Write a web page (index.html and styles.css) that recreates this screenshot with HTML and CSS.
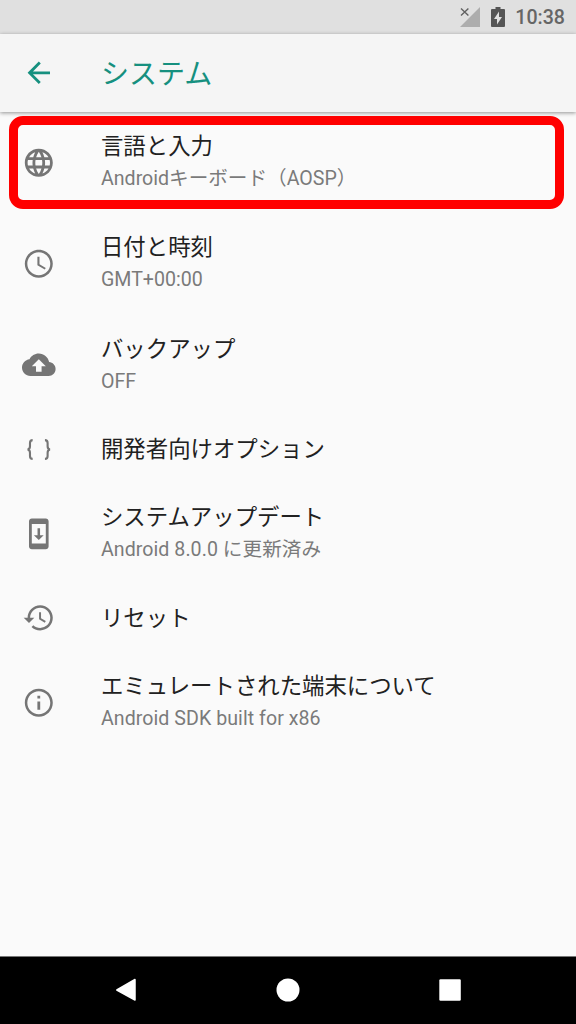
FILE: index.html
```html
<!DOCTYPE html>
<html lang="ja">
<head>
<meta charset="utf-8">
<title>システム</title>
<link rel="stylesheet" href="styles.css">
</head>
<body>
<div class="screen">
  <div class="status">
    <svg class="signal" viewBox="0 0 20 20"><path d="M20 0v20H0z" fill="#adadad"/><path d="M0 0h11L0 11z" fill="#e0e0e0"/><path d="M1 1.5l7.4 7M8.4 1.500l-7.400 7" stroke="#616161" stroke-width="1.4"/></svg>
    <svg class="battery" viewBox="0 0 14 20"><path d="M4.500 0h5v2H13a1 1 0 0 1 1 1v16a1 1 0 0 1-1 1H1a1 1 0 0 1-1-1V3a1 1 0 0 1 1-1h3.500z" fill="#555"/><path d="M8 4.500V10h3L6 17.500v-5.500H3z" fill="#e0e0e0"/></svg>
    <span class="time">10:38</span>
  </div>
  <header class="appbar">
    <svg class="icon back" viewBox="0 0 24 24"><path d="M20 11H7.830l5.590-5.590L12 4l-8 8 8 8 1.410-1.410L7.830 13H20z"/></svg>
    <h1 class="heading">システム</h1>
  </header>
  <main class="list">
    <div class="row">
      <svg class="icon" viewBox="0 0 24 24"><path d="M11.990 2C6.470 2 2 6.480 2 12s4.470 10 9.990 10C17.520 22 22 17.520 22 12S17.520 2 11.990 2zm6.930 6h-2.950c-.32-1.250-.78-2.450-1.380-3.560 1.840.63 3.370 1.910 4.330 3.560zM12 4.040c.83 1.200 1.480 2.530 1.910 3.960h-3.820c.43-1.430 1.080-2.760 1.910-3.960zM4.260 14C4.100 13.360 4 12.690 4 12s.1-1.360.26-2h3.380c-.08.66-.14 1.320-.14 2s.06 1.340.14 2H4.260zm.82 2h2.950c.32 1.250.78 2.450 1.380 3.560-1.840-.63-3.370-1.900-4.330-3.560zm2.950-8H5.080c.96-1.660 2.490-2.930 4.330-3.560C8.810 5.550 8.350 6.750 8.030 8zM12 19.960c-.83-1.200-1.480-2.530-1.910-3.960h3.820c-.43 1.430-1.080 2.760-1.910 3.960zM14.340 14H9.660c-.09-.66-.16-1.320-.16-2s.07-1.350.16-2h4.680c.09.65.16 1.320.16 2s-.07 1.340-.16 2zm.25 5.560c.6-1.110 1.060-2.310 1.380-3.560h2.950c-.96 1.650-2.490 2.930-4.330 3.560zM16.360 14c.08-.66.14-1.320.14-2s-.06-1.340-.14-2h3.380c.16.64.26 1.310.26 2s-.1 1.360-.26 2h-3.380z"/></svg>
      <div class="text"><div class="title">言語と入力</div><div class="summary">Androidキーボード（AOSP）</div></div>
      <div class="highlight"></div>
    </div>
    <div class="row">
      <svg class="icon" viewBox="0 0 24 24"><path d="M11.990 2C6.470 2 2 6.480 2 12s4.470 10 9.990 10C17.520 22 22 17.520 22 12S17.520 2 11.990 2zM12 20.200c-4.530 0-8.200-3.670-8.200-8.200S7.470 3.800 12 3.800s8.200 3.670 8.200 8.200-3.670 8.200-8.200 8.200zM12.500 7H11v6l5.250 3.150.75-1.230-4.500-2.670z"/></svg>
      <div class="text"><div class="title">日付と時刻</div><div class="summary">GMT+00:00</div></div>
    </div>
    <div class="row">
      <svg class="icon" viewBox="0 0 24 24"><path d="M19.350 10.040C18.670 6.590 15.640 4 12 4 9.110 4 6.600 5.640 5.350 8.040 2.340 8.360 0 10.910 0 14c0 3.310 2.690 6 6 6h13c2.760 0 5-2.240 5-5 0-2.640-2.050-4.780-4.650-4.960zM14 13v4h-4v-4H7l5-5 5 5h-3z"/></svg>
      <div class="text"><div class="title">バックアップ</div><div class="summary">OFF</div></div>
    </div>
    <div class="row single">
      <svg class="icon" viewBox="0 0 24 24"><path class="brace" d="M7.600 5.100C6 5.100 5.700 6 5.700 7.200v2.300c0 1.500-.6 2.100-1.700 2.300 1.100.2 1.700.8 1.700 2.300v2.300c0 1.200.3 2.100 1.900 2.100M16.400 5.100c1.600 0 1.900.9 1.900 2.100v2.300c0 1.500.6 2.100 1.700 2.300-1.100.2-1.700.8-1.700 2.300v2.300c0 1.200-.3 2.100-1.900 2.100"/></svg>
      <div class="text"><div class="title">開発者向けオプション</div></div>
    </div>
    <div class="row">
      <svg class="icon" viewBox="0 0 24 24"><path d="M17 1.010L7 1c-1.100 0-2 .9-2 2v18c0 1.100.9 2 2 2h10c1.100 0 2-.9 2-2V3c0-1.100-.9-1.990-2-1.990zM17 19H7V5h10v14zm-1.500-6H12.900V8h-1.800v5H8.500l3.500 3.500z"/></svg>
      <div class="text"><div class="title">システムアップデート</div><div class="summary wide">Android 8.0.0 に更新済み</div></div>
    </div>
    <div class="row single">
      <svg class="icon" viewBox="0 0 24 24"><path d="M13 3c-4.970 0-9 4.030-9 9H1.200L5 15.800 8.800 12H5.800c0-3.980 3.220-7.200 7.200-7.200s7.200 3.220 7.200 7.200-3.220 7.200-7.200 7.200c-1.930 0-3.630-.74-4.900-1.950l-1.300 1.300C8.270 20.100 10.510 21 13 21c4.970 0 9-4.030 9-9s-4.030-9-9-9zm-.8 5v5l4.100 2.500.7-1.200-3.400-2.050V8z"/></svg>
      <div class="text"><div class="title">リセット</div></div>
    </div>
    <div class="row">
      <svg class="icon" viewBox="0 0 24 24"><path d="M11 17h2v-6h-2v6zm1-15C6.480 2 2 6.480 2 12s4.480 10 10 10 10-4.480 10-10S17.520 2 12 2zm0 18.200c-4.520 0-8.200-3.680-8.200-8.200S7.480 3.800 12 3.800s8.200 3.680 8.200 8.200-3.680 8.200-8.200 8.200zM11 9h2V7h-2v2z"/></svg>
      <div class="text"><div class="title">エミュレートされた端末について</div><div class="summary wide">Android SDK built for x86</div></div>
    </div>
  </main>
  <nav class="navbar">
    <svg class="nav-icon" viewBox="0 0 24 24"><path d="M21 1.500v20.500L2.800 12z" stroke-width="1.500"/></svg>
    <svg class="nav-icon" viewBox="0 0 24 24"><circle cx="12" cy="12" r="11.500"/></svg>
    <svg class="nav-icon" viewBox="0 0 24 24"><rect x="1.300" y="1.300" width="21.500" height="21.500" rx="1.200"/></svg>
  </nav>
</div>
</body>
</html>
```
FILE: styles.css
```css
* { box-sizing: border-box; }
body { margin: 0; font-family: Roboto, "Noto Sans CJK JP", sans-serif; background: #fafafa; }
.screen { width: 576px; height: 1024px; display: flex; flex-direction: column; overflow: hidden; }
.status { height: 34px; flex: none; display: flex; align-items: center; justify-content: flex-end; background: #e0e0e0; padding: 0 11px 0 0; }
.signal { width: 20px; height: 20px; margin-right: 11px; }
.battery { width: 14px; height: 20px; margin-right: 10px; }
.time { font-size: 19.6px; font-weight: 500; color: #666; line-height: 34px; padding-top: 2px; }
.appbar { height: 78px; flex: none; display: flex; align-items: center; padding-left: 22.4px; background: #f5f5f5; box-shadow: 0 1px 4px rgba(0,0,0,.42); position: relative; }
.icon { width: 33.6px; height: 33.6px; flex: none; fill: #757575; }
.back { fill: #16907f; }
.heading { margin: 0 0 0 45px; padding-top: 4px; font-size: 28px; font-weight: 400; line-height: 40px; color: #16907f; }
.list { flex: 1; min-height: 0; }
.row { position: relative; height: 101.3px; display: flex; align-items: center; padding-left: 22.4px; }
.row.single { height: 67.4px; }
.text { margin-left: 45px; padding-bottom: 1.4px; }
.single .text { padding-bottom: 0; }
.title { font-size: 22.4px; line-height: 33px; color: #212121; white-space: nowrap; }
.summary { font-size: 19.6px; line-height: 31px; color: #7a7a7a; white-space: nowrap; }
.summary.wide { letter-spacing: .05px; }
.brace { fill: none; stroke: #757575; stroke-width: 1.5; }
.highlight { position: absolute; left: 9px; top: 4px; width: 555px; height: 93px; border: 9px solid #f00; border-radius: 14px; }
.navbar { height: 68px; flex: none; display: flex; align-items: center; justify-content: center; gap: 138px; background: #000; border-top: 1px solid #777; padding-bottom: 2px; }
.nav-icon { width: 24px; height: 24px; fill: #fff; stroke: #fff; stroke-width: 0; stroke-linejoin: round; }
```
